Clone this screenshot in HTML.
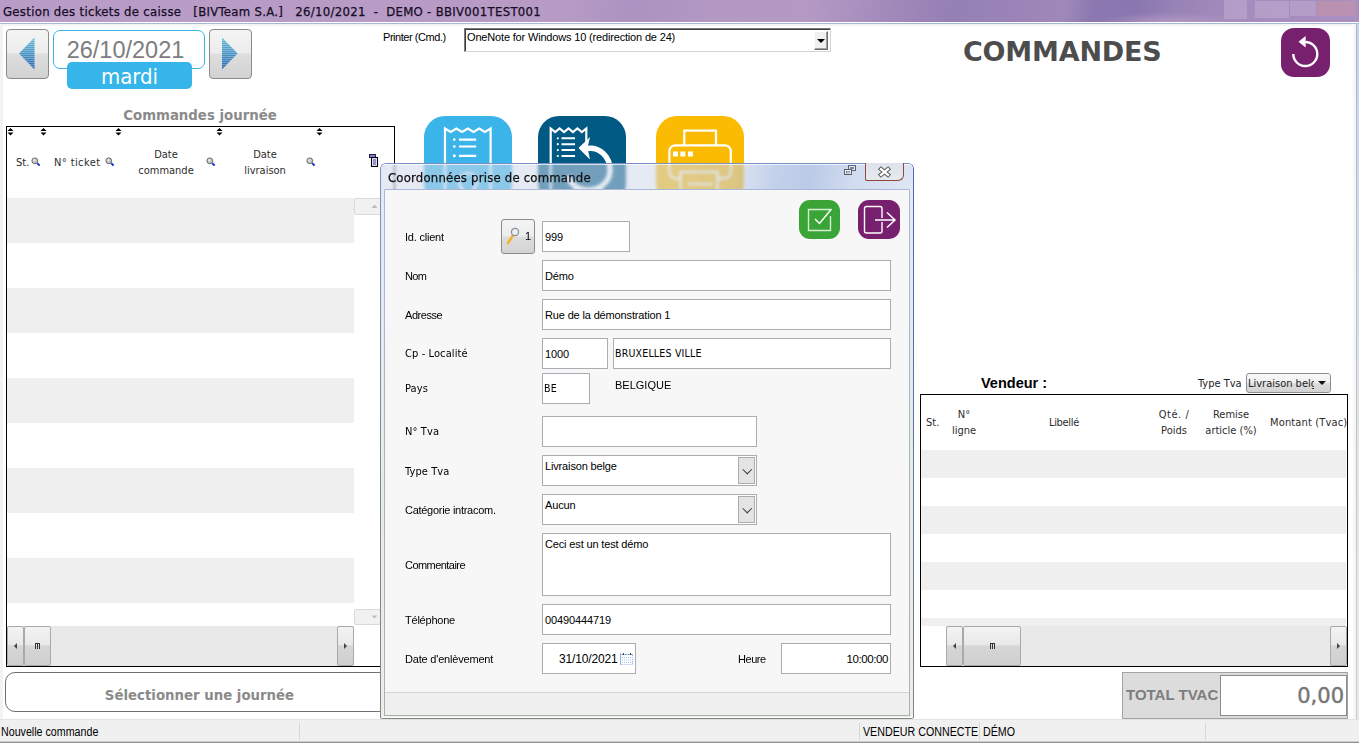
<!DOCTYPE html>
<html><head><meta charset="utf-8"><title>Gestion des tickets de caisse</title>
<style>
*{box-sizing:border-box;margin:0;padding:0}
html,body{width:1359px;height:743px;overflow:hidden;background:#fff}
body{position:relative;font-family:"Liberation Sans",sans-serif;font-size:11px;color:#000}
.abs{position:absolute}
.treb{font-family:"DejaVu Sans Condensed","DejaVu Sans","Liberation Sans",sans-serif}
#titlebar{left:0;top:0;width:1359px;height:22px;background:radial-gradient(ellipse 75px 12px at 1170px 24px,rgba(190,160,200,.8),rgba(190,160,200,0)),linear-gradient(100deg,#b99dc6 0px,#b79bc5 560px,#ab92c0 625px,#b298c3 700px,#b399c4 800px,#a189ba 880px,#9580b4 940px,#9a84b7 1000px,#9f89ba 1050px,#8c78b0 1078px,#8a77b0 1120px,#9883b6 1160px,#a58cbe 1220px,#aa90c0 1359px);box-shadow:0 1px 0 #fff,0 2px 0 #a6b8de,0 4px 0 #f4f4f4}
#titlebar span{position:absolute;left:3px;top:4px;font-size:13px;letter-spacing:.3px;color:#150c26;white-space:pre;-webkit-text-stroke:.25px #150c26}
#leftstrip{left:0;top:24px;width:3px;height:696px;background:#f3f3f3}
.navbtn{width:43px;height:50px;border:1px solid #8a8a8a;border-radius:4px;background:linear-gradient(#f4f4f4 0%,#ececec 48%,#dedede 50%,#d2d2d2 100%)}
#datebox{left:53px;top:30px;width:152px;height:39px;border:1px solid #38b3e8;border-radius:7px;background:#fff;font-size:23.500px;color:#7d7d7d;text-align:center;line-height:38px;padding-right:7px}
#day{left:67px;top:62px;width:125px;height:27px;border-radius:5px;background:#35b5e9;color:#fff;font-size:22px;text-align:center;line-height:27px;padding-top:1px}

#printerlbl{left:383px;top:31px;font-size:11px;white-space:pre;letter-spacing:-.45px}
#printersel{left:464px;top:28px;width:367px;height:24px;letter-spacing:-.17px;border:1px solid #7b7b7b;border-right-color:#d4d4d4;border-bottom-color:#d4d4d4;background:#fff;font-size:11px;line-height:16px;padding-left:2px;box-shadow:inset 1px 1px 0 #3c3c3c}
#printersel i{position:absolute;right:2px;top:2px;width:14px;height:19px;background:#f0f0f0;border:1px solid #fff;border-right-color:#6d6d6d;border-bottom-color:#6d6d6d;box-shadow:inset -1px -1px 0 #a0a0a0}
#printersel i:after{content:"";position:absolute;left:2px;top:7px;border:4px solid transparent;border-top:4px solid #000;border-bottom:0}
#bigtitle{left:963px;top:36px;font-family:"DejaVu Sans","Liberation Sans",sans-serif;font-weight:bold;font-size:27px;color:#4d4d4d;letter-spacing:-0.2px;white-space:pre}
#backbtn{left:1281px;top:28px;width:49px;height:49px;border-radius:13px;background:#77206d}
#cjtitle{left:0px;top:106px;width:400px;text-align:center;font-weight:bold;font-size:14.800px;color:#8a8a8a}
.grid{border:1px solid #000;background:#fff;overflow:hidden}
.hdr{font-size:11px;color:#2c2c2c;text-align:center;line-height:16px;white-space:pre}
.stripe{background:#efefef}
.sb{background:#e9e9e9}
.sbbtn{border:1px solid #a9a9a9;border-radius:2px;background:linear-gradient(#f3f3f3 0%,#e9e9e9 46%,#d6d6d6 50%,#cfcfcf 100%)}
#selbtn{left:5px;top:672px;width:401px;height:40px;padding-top:2px;border:1px solid #6f6f6f;border-radius:10px;background:#fff;text-align:center;line-height:39px;font-weight:bold;font-size:14.800px;color:#8a8a8a;padding-right:12px}
#statusbar{left:0;top:719px;width:1359px;height:24px;background:#f0f0f0;border-top:1px solid #e2e2e2;border-bottom:1px solid #8f958c;box-shadow:inset 0 -1px 0 #c9ccc7;font-size:12px}
#statusbar span{position:absolute;top:5px;white-space:pre;transform:scaleX(.89);transform-origin:0 50%}
#statusbar i{position:absolute;top:3px;width:1px;height:17px;background:#d7d7d7}

.tile{width:88px;height:88px;border-radius:21px}
#vend{left:981px;top:375px;font-size:14.5px;font-weight:bold;white-space:pre}
#ttlbl{left:1198px;top:377px;font-size:11px;color:#222;white-space:pre}
#ttsel{left:1246px;top:373px;width:85px;height:20px;border:1px solid #8e8e8e;border-radius:3px;background:linear-gradient(#f8f8f8,#efefef 48%,#dddddd 52%,#d3d3d3);font-size:11px;line-height:19px;padding-left:1px;color:#222;overflow:hidden;white-space:pre}
#ttsel i{position:absolute;right:0;top:0;width:16px;height:18px;background:linear-gradient(#f8f8f8,#efefef 48%,#dddddd 52%,#d3d3d3)}
#ttsel i:after{content:"";position:absolute;left:4px;top:7px;border:4px solid transparent;border-top:4.500px solid #111;border-bottom:0}
#total{left:1122px;top:672px;width:226px;height:47px;background:#dcdcdc;border:1px solid #a3a3a3}
#total b{position:absolute;left:3px;top:13px;font-size:15px;color:#7d7d7d;white-space:pre}
#total div{position:absolute;left:97px;top:2px;width:127px;height:41px;background:#fff;border:1px solid #8c8c8c;text-align:right;padding-right:2px;font-family:"DejaVu Sans","Liberation Sans",sans-serif;font-size:21px;line-height:40px;color:#767676;-webkit-text-stroke:.45px #767676}

#dlg{left:380px;top:163px;width:534px;height:556px;border-radius:6px 6px 3px 3px;border:1px solid #7c8fc4;border-right-color:#5068b8;border-bottom-color:#7f8878}
.dlgside{position:absolute;top:40px;width:1px;height:514px}
#dlgframe{left:0;top:25px;width:532px;height:529px;border-radius:0 0 2px 2px;background:linear-gradient(#e4ebf5 0px,#e4eaf2 60px,#e6ebea 300px,#eceeea 529px);box-shadow:inset 0 -1px 0 #fff}
#dlgtb{left:0;top:0;width:532px;height:25px;border-radius:5px 5px 0 0;box-shadow:inset 0 1px 0 rgba(255,255,255,.7);background:linear-gradient(100deg,rgba(207,216,234,.55) 0px,rgba(207,216,234,.55) 285px,rgba(196,208,232,.56) 350px,rgba(152,176,220,.58) 390px,rgba(138,164,215,.58) 425px,rgba(185,201,231,.65) 468px,rgba(214,224,242,.78) 532px);-webkit-backdrop-filter:blur(1.600px);backdrop-filter:blur(1.600px)}
#dlgtitle{left:7px;top:6px;font-size:13px;letter-spacing:.2px;color:#111;white-space:pre;-webkit-text-stroke:.25px #111}
#dlgbody{left:3px;top:25px;width:526px;height:527px;background:#f7f7f7;background-clip:padding-box;border:1px solid #aab8d8;border-left-color:transparent;border-right-color:transparent;border-bottom-color:#a9b4a6}
#dlgstat{left:0;top:502px;width:524px;height:23px;background:#f0f0f0;border-top:1px solid #d2d2d2}
.lbl{position:absolute;left:20px;font-size:11px;white-space:pre;line-height:14px;letter-spacing:-.3px}
.lbl.treb{letter-spacing:.1px;margin-top:1px}
.inp{position:absolute;height:31px;background:#fff;border:1px solid #abadb3;font-size:11px;line-height:29px;padding-left:2px;white-space:pre;letter-spacing:-.15px;padding-top:1px}
.inp.treb{letter-spacing:.2px;padding-left:1px;padding-top:0}
.cmb i{position:absolute;right:1px;top:1px;width:17px;height:27px;background:#e4e4e4;border:1px solid #acacac}
.cmb i:after{content:"";position:absolute;left:4.500px;top:8px;width:5.500px;height:5.500px;border-right:1px solid #333;border-bottom:1px solid #333;transform:rotate(45deg) scale(1,1);transform-origin:center}
.sqbtn{position:absolute;top:8.500px;height:39px;border-radius:11px}
</style></head><body>
<div id="titlebar" class="abs treb"><span>Gestion des tickets de caisse   [BIVTeam S.A.]   26/10/2021  -  DEMO - BBIV001TEST001</span></div>
<div id="leftstrip" class="abs"></div>
<div class="abs" style="left:1353px;top:24px;width:6px;height:695px;background:linear-gradient(90deg,#f6f6f6 0,#f6f6f6 3px,transparent 3px),linear-gradient(#a3b4dc,#c4c9c0 75%,#c9cec5)"></div><div class="abs" style="left:1357px;top:24px;width:2px;height:695px;background:linear-gradient(#c8d3ea,#e6e9e6 75%,#e6e9e3)"></div>
<div class="abs" style="left:1224px;top:0;width:23px;height:19px;background:rgba(255,255,255,.16)"></div><div class="abs" style="left:1255px;top:1px;width:34px;height:17px;background:rgba(255,255,255,.16)"></div><div class="abs" style="left:1290px;top:1px;width:26px;height:15px;background:rgba(255,255,255,.14)"></div><div class="abs" style="left:1317px;top:1px;width:38px;height:15px;background:rgba(235,150,140,.28)"></div>
<div class="abs navbtn" style="left:6px;top:29px"><svg width="41" height="48" viewBox="0 0 41 48"><defs><linearGradient id="tg" x1="0" y1="0" x2="0" y2="1"><stop offset="0" stop-color="#6cc0d8"/><stop offset="1" stop-color="#2968b0"/></linearGradient><pattern id="tp" width="4" height="2" patternUnits="userSpaceOnUse"><rect width="4" height="1" fill="#fff" fill-opacity=".28"/></pattern></defs><polygon points="12,23.500 27.500,7.500 27.500,39.500" fill="url(#tg)"/><polygon points="12,23.500 27.500,7.500 27.500,39.500" fill="url(#tp)"/></svg></div>
<div id="datebox" class="abs">26/10/2021</div>
<div id="day" class="abs treb">mardi</div>
<div class="abs navbtn" style="left:209px;top:29px"><svg width="41" height="48" viewBox="0 0 41 48"><polygon points="27.500,23.500 12,7.500 12,39.500" fill="url(#tg)"/><polygon points="27.500,23.500 12,7.500 12,39.500" fill="url(#tp)"/></svg></div>

<div id="printerlbl" class="abs">Printer (Cmd.)</div>
<div id="printersel" class="abs">OneNote for Windows 10 (redirection de 24)<i></i></div>
<div id="bigtitle" class="abs">COMMANDES</div>
<div id="backbtn" class="abs"><svg width="49" height="49" viewBox="0 0 49 49"><path d="M24.3 14 A12 12 0 1 1 12.3 26" fill="none" stroke="#fff" stroke-width="2.4"/><polygon points="17.500,13.800 24.600,8 24.600,19.600" fill="#fff"/></svg></div>
<div id="cjtitle" class="abs treb">Commandes journée</div>
<!-- LEFT GRID -->
<div id="lgrid" class="abs grid" style="left:6px;top:126px;width:389px;height:541px">
<div class="abs stripe" style="left:0;top:71px;width:347px;height:45px"></div>
<div class="abs stripe" style="left:0;top:161px;width:347px;height:45px"></div>
<div class="abs stripe" style="left:0;top:251px;width:347px;height:45px"></div>
<div class="abs stripe" style="left:0;top:341px;width:347px;height:45px"></div>
<div class="abs stripe" style="left:0;top:431px;width:347px;height:45px"></div>
<svg class="abs" style="left:0px;top:1px" width="7" height="8" viewBox="0 0 7 8"><polygon points="3.5,0 6.5,3 0.5,3" fill="#000"/><polygon points="0.5,4.5 6.5,4.5 3.5,7.5" fill="#000"/></svg>
<svg class="abs" style="left:33px;top:1px" width="7" height="8" viewBox="0 0 7 8"><polygon points="3.5,0 6.5,3 0.5,3" fill="#000"/><polygon points="0.5,4.5 6.5,4.5 3.5,7.5" fill="#000"/></svg>
<svg class="abs" style="left:108px;top:1px" width="7" height="8" viewBox="0 0 7 8"><polygon points="3.5,0 6.5,3 0.5,3" fill="#000"/><polygon points="0.5,4.5 6.5,4.5 3.5,7.5" fill="#000"/></svg>
<svg class="abs" style="left:209px;top:1px" width="7" height="8" viewBox="0 0 7 8"><polygon points="3.5,0 6.5,3 0.5,3" fill="#000"/><polygon points="0.5,4.5 6.5,4.5 3.5,7.5" fill="#000"/></svg>
<svg class="abs" style="left:309px;top:1px" width="7" height="8" viewBox="0 0 7 8"><polygon points="3.5,0 6.5,3 0.5,3" fill="#000"/><polygon points="0.5,4.5 6.5,4.5 3.5,7.5" fill="#000"/></svg>
<div class="abs hdr treb" style="left:9px;top:28px">St.</div>
<svg class="abs" style="left:24px;top:30px" width="10" height="10" viewBox="0 0 10 10"><circle cx="3.800" cy="3.800" r="2.900" fill="#c4c4c4" stroke="#6a6a6a" stroke-width="1"/><circle cx="3.200" cy="3.200" r="1.200" fill="#e6e6e6"/><path d="M6.300 6.300 L8.600 8.600" stroke="#1c2fe0" stroke-width="2"/></svg>
<div class="abs hdr treb" style="left:47px;top:28px;letter-spacing:.4px">N° ticket</div>
<svg class="abs" style="left:98px;top:30px" width="10" height="10" viewBox="0 0 10 10"><circle cx="3.800" cy="3.800" r="2.900" fill="#c4c4c4" stroke="#6a6a6a" stroke-width="1"/><circle cx="3.200" cy="3.200" r="1.200" fill="#e6e6e6"/><path d="M6.300 6.300 L8.600 8.600" stroke="#1c2fe0" stroke-width="2"/></svg>
<div class="abs hdr treb" style="left:119px;top:20px;width:80px">Date
commande</div>
<svg class="abs" style="left:199px;top:30px" width="10" height="10" viewBox="0 0 10 10"><circle cx="3.800" cy="3.800" r="2.900" fill="#c4c4c4" stroke="#6a6a6a" stroke-width="1"/><circle cx="3.200" cy="3.200" r="1.200" fill="#e6e6e6"/><path d="M6.300 6.300 L8.600 8.600" stroke="#1c2fe0" stroke-width="2"/></svg>
<div class="abs hdr treb" style="left:218px;top:20px;width:80px">Date
livraison</div>
<svg class="abs" style="left:299px;top:30px" width="10" height="10" viewBox="0 0 10 10"><circle cx="3.800" cy="3.800" r="2.900" fill="#c4c4c4" stroke="#6a6a6a" stroke-width="1"/><circle cx="3.200" cy="3.200" r="1.200" fill="#e6e6e6"/><path d="M6.300 6.300 L8.600 8.600" stroke="#1c2fe0" stroke-width="2"/></svg>
<svg class="abs" style="left:362px;top:27px" width="10" height="13" viewBox="0 0 10 13"><rect x="0.500" y="0.500" width="6" height="3" fill="#7d7de0" stroke="#223"/><rect x="2.500" y="3.500" width="6" height="9" fill="#e6e6fb" stroke="#000" stroke-width="1.100"/><path d="M4 6h3M4 8h3M4 10h3" stroke="#3a3ab0" stroke-width="1"/></svg>
<div class="abs sbbtn" style="left:347px;top:71px;width:27px;height:17px;background:#f1f1f1;border-color:#d9d9d9"><svg width="25" height="15"><polygon points="16.500,9 22.500,9 19.500,5.500" fill="#bdbdbd"/></svg></div>
<div class="abs sbbtn" style="left:347px;top:482px;width:27px;height:16px;background:#f1f1f1;border-color:#d9d9d9"><svg width="25" height="14"><polygon points="16.500,5.500 22.500,5.500 19.500,8.500" fill="#bdbdbd"/></svg></div>
<div class="abs sb" style="left:0;top:499px;width:347px;height:40px"></div>
<div class="abs sbbtn" style="left:0;top:499px;width:17px;height:40px"><svg width="15" height="38"><polygon points="9,16 9,22 6,19" fill="#444"/></svg></div>
<div class="abs sbbtn" style="left:17px;top:499px;width:27px;height:40px"><svg width="25" height="38"><path d="M10.500 16v6M12.500 16v6M14.500 16v6M10 16.500h5" stroke="#333" stroke-width="1"/></svg></div>
<div class="abs sbbtn" style="left:330px;top:499px;width:17px;height:40px"><svg width="15" height="38"><polygon points="6,16 6,22 9,19" fill="#444"/></svg></div>
</div>
<div id="selbtn" class="abs treb">Sélectionner une journée</div>
<div class="abs tile" style="left:424px;top:116px;background:#3bb4e9"><svg width="88" height="88" viewBox="0 0 88 88"><path d="M21 76 V12.500 l5.700 3.500 5.700-3.500 5.700 3.500 5.700-3.500 5.700 3.500 5.700-3.500 5.700 3.500 5.700-3.500 V76" fill="none" stroke="#fff" stroke-width="2.200"/><path d="M35 23.600 h17.200 M35 30.500 h17.200 M35 39.800 h17.200" stroke="#fff" stroke-width="2.200"/><circle cx="30.300" cy="23.600" r="1.300" fill="#fff"/><circle cx="30.300" cy="30.500" r="1.300" fill="#fff"/><circle cx="30.300" cy="39.800" r="1.500" fill="#fff"/><circle cx="44" cy="66" r="9" fill="none" stroke="#fff" stroke-width="2.200"/></svg></div>
<div class="abs tile" style="left:538px;top:116px;background:#005a84"><svg width="88" height="88" viewBox="0 0 88 88"><path d="M12.700 76 V12.500 l4.450 3.500 4.450-3.500 4.450 3.500 4.450-3.500 4.450 3.500 4.450-3.500 4.450 3.500 4.450-3.500 V26" fill="none" stroke="#fff" stroke-width="2.200"/><path d="M23.500 22.300 h13.500 M23.500 28.200 h13.500 M23.500 34.100 h13.500 M23.500 40 h13.500" stroke="#fff" stroke-width="2"/><circle cx="19.800" cy="22.300" r="1.100" fill="#fff"/><circle cx="19.800" cy="28.200" r="1.100" fill="#fff"/><circle cx="19.800" cy="34.100" r="1.100" fill="#fff"/><circle cx="19.800" cy="40" r="1.100" fill="#fff"/><path d="M49 32.500 C61 30.500 72 40 72 54 C72 66 62 74 50 74 C40 74 32 68 30 60" fill="none" stroke="#fff" stroke-width="5.500"/><path d="M40.500 32 L52 21 L49.500 32 L52 43.500 Z" fill="#fff"/></svg></div>
<div class="abs tile" style="left:656px;top:116px;background:#fcbb03"><svg width="88" height="88" viewBox="0 0 88 88"><rect x="28.300" y="14.600" width="31.700" height="18" fill="none" stroke="#fff" stroke-width="2.200"/><rect x="13.400" y="29.300" width="61.400" height="33" rx="6" fill="#fcbb03" stroke="#fff" stroke-width="2.200"/><rect x="17" y="35.500" width="4.900" height="5" fill="#fff"/><rect x="24.400" y="35.500" width="4.900" height="5" fill="#fff"/><rect x="32" y="35.500" width="4.900" height="5" fill="#fff"/><rect x="24.500" y="56" width="37" height="20" fill="#fcbb03" stroke="#fff" stroke-width="2.200"/><path d="M32 68 h24" stroke="#fff" stroke-width="2.200"/></svg></div>
<div id="vend" class="abs">Vendeur :</div>
<div id="ttlbl" class="abs treb">Type Tva</div>
<div id="ttsel" class="abs treb">Livraison belge<i></i></div>
<div id="rgrid" class="abs grid" style="left:920px;top:394px;width:428px;height:273px">
<div class="abs stripe" style="left:0;top:55px;width:425px;height:28px"></div>
<div class="abs stripe" style="left:0;top:111px;width:425px;height:28px"></div>
<div class="abs stripe" style="left:0;top:167px;width:425px;height:28px"></div>
<div class="abs stripe" style="left:0;top:223px;width:425px;height:8px"></div>
<div class="abs hdr treb" style="left:5px;top:20px">St.</div>
<div class="abs hdr treb" style="left:13px;top:12px;width:60px">N°
ligne</div>
<div class="abs hdr treb" style="left:103px;top:20px;width:80px;letter-spacing:-.3px">Libellé</div>
<div class="abs hdr treb" style="left:213px;top:12px;width:80px"><span style="letter-spacing:.55px">Qté. /</span>
Poids</div>
<div class="abs hdr treb" style="left:260px;top:12px;width:100px">Remise
article (%)</div>
<div class="abs hdr treb" style="left:349px;top:20px;letter-spacing:.15px">Montant (Tvac)</div>
<div class="abs sb" style="left:25px;top:231px;width:400px;height:40px"></div>
<div class="abs sbbtn" style="left:25px;top:231px;width:17px;height:40px"><svg width="15" height="38"><polygon points="9,16 9,22 6,19" fill="#444"/></svg></div>
<div class="abs sbbtn" style="left:42px;top:231px;width:58px;height:40px"><svg width="56" height="38"><path d="M26.500 16v6M28.500 16v6M30.500 16v6M26 16.500h5" stroke="#333" stroke-width="1"/></svg></div>
<div class="abs sbbtn" style="left:409px;top:231px;width:17px;height:40px"><svg width="15" height="38"><polygon points="6,16 6,22 9,19" fill="#444"/></svg></div>
</div>
<div id="total" class="abs"><b>TOTAL TVAC</b><div>0,00</div></div>
<!-- DIALOG -->
<div id="dlg" class="abs">
<div id="dlgframe" class="abs"></div>
<div class="dlgside" style="left:-1px;background:linear-gradient(#7c8fc4,#7f8878 70%)"></div><div class="dlgside" style="left:532px;background:linear-gradient(#5068b8,#6b7a86 80%,#7f8878)"></div>
<div class="dlgside" style="left:3px;top:26px;height:526px;background:linear-gradient(#aab8d8,#aab8d8 10%,#a9b4a6 75%)"></div><div class="dlgside" style="left:528px;top:26px;height:526px;background:linear-gradient(#aab8d8,#aab8d8 10%,#a9b4a6 75%)"></div>
<div id="dlgtb" class="abs"></div>
<div id="dlgtitle" class="abs treb">Coordonnées prise de commande</div>
<svg class="abs" style="left:463px;top:1px" width="13" height="11" viewBox="0 0 13 11"><rect x="4.500" y="0.500" width="7" height="5" fill="#dfe5ee" stroke="#5a6270"/><rect x="6" y="2" width="4" height="2" fill="#7d8796"/><rect x="0.500" y="4.500" width="7" height="5" fill="#eef1f6" stroke="#5a6270"/><rect x="2.500" y="6.500" width="3" height="1.500" fill="#fff" stroke="#5a6270" stroke-width=".6"/></svg>
<div class="abs" style="left:484px;top:-1px;width:39px;height:18px;border:1px solid #8b4a3a;border-top:0;border-radius:0 0 6px 2px;background:linear-gradient(#dde2ea,#e6e9f0)"><svg width="37" height="17" viewBox="0 0 37 18" preserveAspectRatio="none"><path d="M15 6.500 L22 12.500 M22 6.500 L15 12.500" stroke="#5a5a5a" stroke-width="4.400" stroke-linecap="square"/><path d="M15 6.500 L22 12.500 M22 6.500 L15 12.500" stroke="#fff" stroke-width="2.400" stroke-linecap="square"/></svg></div>
<div id="dlgbody" class="abs">
<div class="abs" style="left:0;top:1px">
<div class="sqbtn" style="left:414px;width:41px;background:#3aa437"><svg width="41" height="39" viewBox="0 0 41 39"><path d="M31 9.500 H9.500 V30.500 H31.500 V16" fill="none" stroke="#d8efd6" stroke-width="1.400"/><path d="M16 19 L20.500 23.500 L32.500 9" fill="none" stroke="#fff" stroke-width="1.500"/></svg></div>
<div class="sqbtn" style="left:473px;width:42px;background:#77206d"><svg width="42" height="39" viewBox="0 0 42 39"><path d="M24 18 V8.500 a2 2 0 0 0 -2 -2 H8.500 a2 2 0 0 0 -2 2 V31 a2 2 0 0 0 2 2 H22 a2 2 0 0 0 2 -2 V22" fill="none" stroke="#fff" stroke-width="1.400"/><path d="M17 20 H37 M29 12.500 L37 20 L29 27.500" fill="none" stroke="#fff" stroke-width="1.500"/></svg></div>
<div class="lbl " style="top:39px;letter-spacing:-0.21px">Id. client</div>
<div class="abs" style="left:116px;top:28px;width:34px;height:35px;border:1px solid #8b8b8b;border-radius:3px;background:linear-gradient(#f4f4f4 0%,#ececec 48%,#dddddd 52%,#d4d4d4 100%)"><svg class="abs" style="left:4px;top:7px" width="14" height="18" viewBox="0 0 14 18"><path d="M2 16 L7.500 7.500" stroke="#f0b323" stroke-width="2.400" stroke-linecap="round"/><circle cx="9" cy="5" r="3.600" fill="#e8f0f6" stroke="#8a8f96" stroke-width="1.200"/></svg><span class="abs" style="left:23px;top:10px;font-size:11px">1</span></div>
<div class="inp " style="left:157px;top:30px;width:88px;height:31px;">999</div>
<div class="lbl " style="top:78px;letter-spacing:-0.67px">Nom</div>
<div class="inp " style="left:157px;top:69px;width:349px;height:31px;">Démo</div>
<div class="lbl " style="top:117px;letter-spacing:-0.44px">Adresse</div>
<div class="inp " style="left:157px;top:108px;width:349px;height:31px;">Rue de la démonstration 1</div>
<div class="lbl treb" style="top:155px">Cp - Localité</div>
<div class="inp " style="left:157px;top:147px;width:66px;height:31px;">1000</div>
<div class="inp treb" style="left:228px;top:147px;width:278px;height:31px;font-size:10.5px">BRUXELLES VILLE</div>
<div class="lbl treb" style="top:190px">Pays</div>
<div class="inp treb" style="left:157px;top:182px;width:48px;height:31px;font-size:10.5px">BE</div>
<div class="lbl" style="left:230px;top:187px;font-size:11px;letter-spacing:0">BELGIQUE</div>
<div class="lbl treb" style="top:233px">N° Tva</div>
<div class="inp " style="left:157px;top:225px;width:215px;height:31px;"></div>
<div class="lbl treb" style="top:273px">Type Tva</div>
<div class="inp cmb" style="left:157px;top:264px;width:215px;height:31px;line-height:18px">Livraison belge<i></i></div>
<div class="lbl " style="top:312px;letter-spacing:-0.28px">Catégorie intracom.</div>
<div class="inp cmb" style="left:157px;top:303px;width:215px;height:31px;line-height:18px">Aucun<i></i></div>
<div class="lbl " style="top:367px;letter-spacing:-0.55px">Commentaire</div>
<div class="inp " style="left:157px;top:342px;width:349px;height:63px;line-height:18px">Ceci est un test démo</div>
<div class="lbl " style="top:422px;letter-spacing:-0.22px">Téléphone</div>
<div class="inp " style="left:157px;top:413px;width:349px;height:31px;;letter-spacing:-.12px">00490444719</div>
<div class="lbl " style="top:461px;letter-spacing:-0.19px">Date d'enlèvement</div>
<div class="inp " style="left:157px;top:452px;width:94px;height:31px;padding-left:16px;font-size:12px">31/10/2021</div>
<svg class="abs" style="left:235px;top:461px" width="14" height="14" viewBox="0 0 14 14"><rect x="0.500" y="1.500" width="12" height="11" fill="#fff"/><path d="M0.500 1v12" stroke="#8fb0dc" stroke-width="1"/><path d="M1.500 2.500h11" stroke="#5f8ccc" stroke-width="1" stroke-dasharray="2 1"/><path d="M2 5.500h10.500M2 8h10.500M2 10.500h10.500" stroke="#9dbdeb" stroke-width="1" stroke-dasharray="1 1"/><path d="M12.500 3v9.500M1.500 12.500h11" stroke="#9dbdeb" stroke-width="1" stroke-dasharray="1 1"/><path d="M3.500 1v2M10.500 1v2" stroke="#444" stroke-width="1"/></svg>
<div class="lbl" style="left:353px;top:461px;font-size:11px;letter-spacing:-.44px">Heure</div>
<div class="inp " style="left:396px;top:452px;width:110px;height:31px;text-align:right;padding-right:2px;font-size:11.500px;letter-spacing:-.4px">10:00:00</div>
</div>
<div id="dlgstat" class="abs"></div>
</div>
</div>
<!-- STATUS BAR -->
<div id="statusbar" class="abs"><span style="left:1px">Nouvelle commande</span><i style="left:299px"></i><i style="left:859px"></i><span style="left:863px">VENDEUR CONNECTE</span><i style="left:979px"></i><span style="left:983px">DÉMO</span><i style="left:1205px"></i></div>
</body></html>
